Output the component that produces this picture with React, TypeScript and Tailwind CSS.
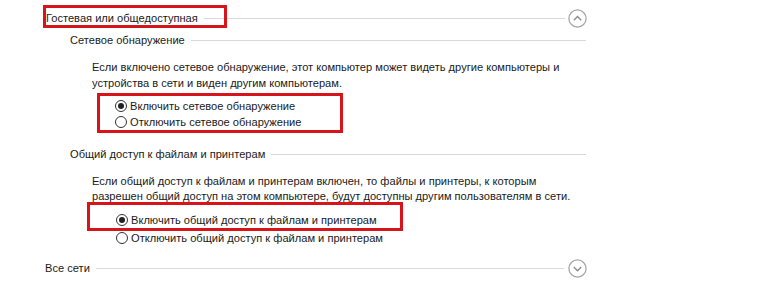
// Network sharing settings panel (Windows-style advanced sharing options)

function Radio({ checked }: { checked?: boolean }) {
  return (
    <span className="w-[12px] h-[12px] rounded-full border border-[#333] bg-white flex items-center justify-center flex-shrink-0">
      {checked && <span className="w-[6px] h-[6px] rounded-full bg-[#222]" />}
    </span>
  )
}

function CircleChevron({ up }: { up?: boolean }) {
  return (
    <svg width="19" height="19" viewBox="0 0 19 19" className="flex-shrink-0">
      <circle cx="9.5" cy="9.5" r="8.6" fill="none" stroke="#a6a6a6" strokeWidth="1.3" />
      {up ? (
        <path d="M5.8 11.2 L9.5 7.5 L13.2 11.2" fill="none" stroke="#8c8c8c" strokeWidth="1.4" />
      ) : (
        <path d="M5.8 8 L9.5 11.7 L13.2 8" fill="none" stroke="#8c8c8c" strokeWidth="1.4" />
      )}
    </svg>
  )
}

function SectionLine({ label, className }: { label: string; className: string }) {
  return (
    <div className={`flex items-center h-[16px] ${className}`}>
      <span className="whitespace-nowrap">{label}</span>
      <div className="flex-1 h-px bg-[#d9d9d9] ml-[6px]" />
    </div>
  )
}

function RadioRow({ checked, label, className = '' }: { checked?: boolean; label: string; className?: string }) {
  return (
    <div className={`flex items-center h-[16px] gap-[3px] ${className}`}>
      <Radio checked={checked} />
      <span className="whitespace-nowrap">{label}</span>
    </div>
  )
}

export default function App() {
  return (
    <div
      className="relative w-[768px] h-[292px] bg-white text-[#1a1a1a] text-[11.1px] leading-[16px] overflow-hidden pt-[10px]"
      style={{ fontFamily: '"Liberation Sans", Arial, sans-serif' }}
    >
      {/* Guest or public */}
      <div className="flex items-center h-[16px] ml-[46px] mr-[181px]">
        <span className="whitespace-nowrap">Гостевая или общедоступная</span>
        <div className="flex-1 h-px bg-[#d9d9d9] ml-[6px]" />
        <span className="ml-[3px]">
          <CircleChevron up />
        </span>
      </div>
      {/* red highlight around header */}
      <div className="absolute left-[43px] top-[5px] w-[184px] h-[23px] border-[3px] border-[#d8141b]" />

      <SectionLine label="Сетевое обнаружение" className="mt-[6px] ml-[70px] mr-[182px]" />

      <p className="mt-[11px] ml-[92px] whitespace-nowrap">
        Если включено сетевое обнаружение, этот компьютер может видеть другие компьютеры и
        <br />
        устройства в сети и виден другим компьютерам.
      </p>

      <div className="mt-[2px] ml-[97px] w-[246px] border-[3px] border-[#d8141b] pt-[2px] pl-[15px]">
        <RadioRow checked label="Включить сетевое обнаружение" />
        <RadioRow label="Отключить сетевое обнаружение" />
      </div>

      <SectionLine label="Общий доступ к файлам и принтерам" className="mt-[13px] ml-[70px] mr-[182px]" />

      <p className="mt-[12px] ml-[92px] leading-[15px] whitespace-nowrap">
        Если общий доступ к файлам и принтерам включен, то файлы и принтеры, к которым
        <br />
        разрешен общий доступ на этом компьютере, будут доступны другим пользователям в сети.
      </p>

      <div className="-mt-[2px] ml-[87px] w-[316px] border-[3px] border-[#d8141b] pt-[7px] pl-[26px]">
        <RadioRow checked label="Включить общий доступ к файлам и принтерам" />
      </div>
      <RadioRow label="Отключить общий доступ к файлам и принтерам" className="-mt-px ml-[116px]" />

      {/* All networks */}
      <div className="flex items-center h-[16px] mt-[14px] ml-[45px] mr-[181px]">
        <span className="whitespace-nowrap">Все сети</span>
        <div className="flex-1 h-px bg-[#d9d9d9] ml-[6px]" />
        <span className="ml-[4px]">
          <CircleChevron />
        </span>
      </div>
    </div>
  )
}
